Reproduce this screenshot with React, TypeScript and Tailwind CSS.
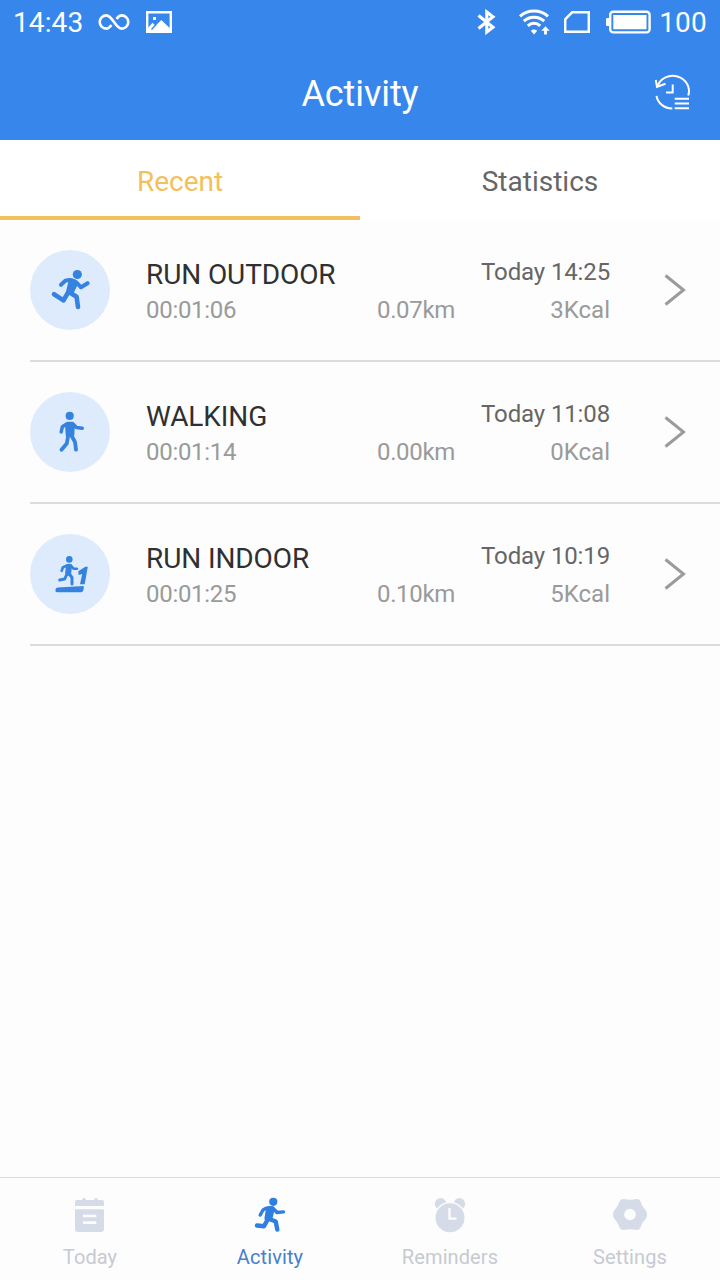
import { useState } from "react";

type ActivityKind = "outdoor" | "walking" | "indoor";

interface Activity {
  id: number;
  kind: ActivityKind;
  title: string;
  duration: string;
  distance: string;
  date: string;
  calories: string;
}

const ACTIVITIES: Activity[] = [
  {
    id: 1,
    kind: "outdoor",
    title: "RUN OUTDOOR",
    duration: "00:01:06",
    distance: "0.07km",
    date: "Today 14:25",
    calories: "3Kcal",
  },
  {
    id: 2,
    kind: "walking",
    title: "WALKING",
    duration: "00:01:14",
    distance: "0.00km",
    date: "Today 11:08",
    calories: "0Kcal",
  },
  {
    id: 3,
    kind: "indoor",
    title: "RUN INDOOR",
    duration: "00:01:25",
    distance: "0.10km",
    date: "Today 10:19",
    calories: "5Kcal",
  },
];

const NAV_ITEMS = [
  { label: "Today", Icon: CalendarIcon },
  { label: "Activity", Icon: RunnerIcon },
  { label: "Reminders", Icon: AlarmIcon },
  { label: "Settings", Icon: GearIcon },
];

export default function App() {
  const [tab, setTab] = useState("Recent");
  const [page, setPage] = useState("Activity");

  return (
    <div className="w-[720px] h-[1280px] flex flex-col bg-[#fdfdfd] font-[Roboto,sans-serif] overflow-hidden">
      <header className="h-[140px] shrink-0 bg-[#3686eb] text-white">
        <StatusBar />
        <div className="h-[94px] grid grid-cols-[1fr_auto_1fr] items-center">
          <h1 className="col-start-2 pt-[2px] text-[36px] leading-none font-normal tracking-[-0.1px]">
            Activity
          </h1>
          <button className="justify-self-end mr-7" aria-label="History">
            <HistoryIcon />
          </button>
        </div>
      </header>

      <div className="h-20 shrink-0 grid grid-cols-2 bg-white">
        {["Recent", "Statistics"].map((name) => (
          <button
            key={name}
            onClick={() => setTab(name)}
            className={`pt-2 text-[28px] leading-none border-b-4 ${
              tab === name
                ? "text-[#f3c05c] border-[#f0c15e]"
                : "text-[#666] border-transparent"
            }`}
          >
            {name}
          </button>
        ))}
      </div>

      <main className="flex-1">
        {ACTIVITIES.map((activity) => (
          <ActivityRow key={activity.id} activity={activity} />
        ))}
      </main>

      <nav className="h-[103px] shrink-0 grid grid-cols-4 border-t border-[#d9dbde]">
        {NAV_ITEMS.map(({ label, Icon }) => (
          <button
            key={label}
            onClick={() => setPage(label)}
            className={`flex flex-col items-center pt-[17px] ${
              page === label ? "text-[#2f7fe0]" : "text-[#d5dbe7]"
            }`}
          >
            <Icon />
            <span
              className={`mt-3 text-[20px] leading-5 tracking-[0.1px] ${
                page === label ? "text-[#4680cf]" : "text-[#c6cad2]"
              }`}
            >
              {label}
            </span>
          </button>
        ))}
      </nav>
    </div>
  );
}

function ActivityRow({ activity }: { activity: Activity }) {
  return (
    <div className="ml-[30px] h-[142px] flex items-center border-b-2 border-[#dcdcdc]">
      <div className="size-20 shrink-0 rounded-full bg-[#deebfc] text-[#3682df]">
        <ActivityIcon kind={activity.kind} />
      </div>
      <div className="ml-9 w-[231px] pt-[5px]">
        <p className="text-[28px] leading-9 tracking-[-0.1px] text-[#303030]">
          {activity.title}
        </p>
        <p className="text-[24px] leading-[35px] tracking-[-0.3px] text-[#9a9a9a]">
          {activity.duration}
        </p>
      </div>
      <div className="w-[233px] pt-[3px]">
        <p className="text-[24px] leading-[37px] tracking-[-0.13px] text-right text-[#666]">
          {activity.date}
        </p>
        <div className="flex justify-between text-[24px] leading-[39px] text-[#9a9a9a]">
          <span className="tracking-[-0.35px]">{activity.distance}</span>
          <span>{activity.calories}</span>
        </div>
      </div>
      <svg
        className="ml-[53px] w-6 h-9"
        viewBox="0 0 24 36"
        fill="none"
        stroke="#9b9b9b"
        strokeWidth="3"
      >
        <path d="M2.5 3.5 20.5 18 2.5 32.5" />
      </svg>
    </div>
  );
}

function ActivityIcon({ kind }: { kind: ActivityKind }) {
  if (kind === "outdoor") {
    return (
      <Figure>
        <circle cx="47.3" cy="24.5" r="4.6" fill="currentColor" stroke="none" />
        <path d="M31 34.8 35.6 30.6Q40 29 44 31L47 33 51 37.3 57.6 33.2" strokeWidth="4" />
        <path d="M40.5 32 46 33.5 41.5 42.5 38 42Z" fill="currentColor" strokeWidth="4.2" />
        <path d="M37.5 43.5 33.5 50.4 24 44.2" strokeWidth="4.6" />
        <path d="M40.5 43 46.6 46.8 48 57" strokeWidth="4.6" />
      </Figure>
    );
  }

  if (kind === "walking") {
    return (
      <Figure>
        <circle cx="39.7" cy="23.9" r="4.1" fill="currentColor" stroke="none" />
        <path d="M31.2 40 32.3 34.8 37.5 31.5H42.5L46.5 35.5 52.2 36.3" strokeWidth="3.5" />
        <path d="M37.2 33H42.8L42.2 43H37.8Z" fill="currentColor" strokeWidth="4.2" />
        <path d="M38.3 43 36.8 51.5 31.5 57.7" strokeWidth="3.8" />
        <path d="M41.2 43 45 50 46 57.7" strokeWidth="3.8" />
      </Figure>
    );
  }

  return (
    <Figure>
      <circle cx="39.3" cy="25.4" r="3.3" fill="currentColor" stroke="none" />
      <path d="M31.7 36.8 32.8 33.5 37.5 31.2H40.5L43.5 34.6 47 34.8" strokeWidth="2.6" />
      <path d="M38.9 32.8 38.2 38.8" strokeWidth="6" />
      <path d="M37.2 39.5 34.7 45 29.7 46" strokeWidth="3" />
      <path d="M39 39.5 42 43.5V50" strokeWidth="3" />
      <path
        d="M48.3 37.2 55.3 32.8H57.8L54.7 50.3H50L52.2 39.9 48.6 41ZM27.5 53.6 53.7 52V54.8Q53.2 58.2 51 58.2H27Q25.2 58.2 25.4 56 25.6 53.8 27.5 53.6Z"
        fill="currentColor"
        stroke="none"
      />
    </Figure>
  );
}

function Figure({ children }: { children: React.ReactNode }) {
  return (
    <svg
      className="size-20"
      viewBox="0 0 80 80"
      fill="none"
      stroke="currentColor"
      strokeLinecap="round"
      strokeLinejoin="round"
    >
      {children}
    </svg>
  );
}

function StatusBar() {
  return (
    <div className="h-[46px] flex items-center pl-[13px] pr-[13px] pb-[2px] text-[28px] leading-none">
      <span className="w-[85px] pt-[2px] tracking-[0.1px]">14:43</span>
      <svg className="w-8 h-[18px]" viewBox="0 0 32 18" fill="none" stroke="currentColor" strokeWidth="2.6">
        <path d="M13.5 12C11.8 14.4 10.3 15.6 8.3 15.6A6.6 6.6 0 0 1 8.3 2.4C14.5 2.4 17.5 15.6 23.7 15.6A6.6 6.6 0 0 0 23.7 2.4C21.7 2.4 20.2 3.6 18.5 6" />
      </svg>
      <svg className="ml-4 w-[26px] h-[22px]" viewBox="0 0 26 22">
        <path d="M1.2 1.2H24.8V20.8H1.2Z" fill="none" stroke="currentColor" strokeWidth="2.4" />
        <path d="M1 20V18L6.5 11.7 9.5 14.7 15.3 9 24.8 18V21H1ZM7 6h3v3H7Z" fill="currentColor" />
        <path d="M5.5 18.5 10 13.5" stroke="#3686eb" strokeWidth="1.3" />
      </svg>

      <div className="ml-auto flex items-center">
        <svg className="w-5 h-[26px]" viewBox="0 0 20 26" fill="none" stroke="currentColor" strokeWidth="3.1">
          <path d="M1.5 6.5 16 18.2 9.8 23V3L16 7.8 1.5 19.5" />
        </svg>
        <svg className="ml-[22px] w-[31px] h-[26px]" viewBox="0 0 31 26" fill="none" stroke="currentColor" strokeWidth="3">
          <path d="M1 7.3C8.5.2 21.5.2 29 7.3M4.8 12.2C10.5 6.8 19.5 6.8 25.2 12.2M8.8 16.8C12.4 13.3 17.6 13.3 21.2 16.8" />
          <path d="M15 25.4 11.8 21.8Q15 19 18.2 21.8ZM26.5 17.3 30.7 21.7H27.9V25.5H25.1V21.7H22.3Z" fill="currentColor" stroke="none" />
        </svg>
        <svg className="ml-[14px] w-[26px] h-[22px]" viewBox="0 0 26 22" fill="none" stroke="currentColor" strokeWidth="2.5">
          <path d="M8.3 1.2H24.8V20.8H1.2V8.3Z" />
        </svg>
        <svg className="ml-4 w-[45px] h-6" viewBox="0 0 45 24">
          <rect x="4.2" y="1.8" width="39.4" height="20.6" rx="3" fill="none" stroke="currentColor" strokeWidth="2.4" />
          <path d="M7.3 5H40.5V19.2H7.3ZM3 8V16H1.2Q0 16 0 14.8V9.2Q0 8 1.2 8Z" fill="currentColor" />
        </svg>
        <span className="ml-2 pt-[2px] tracking-[0.2px]">100</span>
      </div>
    </div>
  );
}

function HistoryIcon() {
  return (
    <svg className="size-10" viewBox="0 0 40 40" fill="none" stroke="currentColor" strokeWidth="2">
      <path d="M5.3 13.8A16 15.2 0 0 1 36.3 22.5M4.5 22.8A16 14.8 0 0 0 20.3 35.5" />
      <path d="M3.8 7 5 13.8 13.5 10.7M20.7 11.5V19.5H14" />
      <path d="M22.7 25.8H37M22.7 30.6H37M22.7 35.3H37" />
    </svg>
  );
}

function CalendarIcon() {
  return (
    <svg className="size-10" viewBox="0 0 40 40" fill="currentColor">
      <path d="M5 11V7Q5 5 7 5H12L13 3H15L16 5H24L25 3H27L28 5H32Q34 5 34 7V11ZM5 14.3H34V34Q34 37 31 37H8Q5 37 5 34Z" />
      <path d="M13 21H26.3M13 27.6H26.3" stroke="#fdfdfd" strokeWidth="2.6" />
    </svg>
  );
}

function RunnerIcon() {
  return (
    <svg
      className="size-10"
      viewBox="0 0 40 40"
      fill="none"
      stroke="currentColor"
      strokeLinecap="round"
      strokeLinejoin="round"
    >
      <circle cx="23.3" cy="6.8" r="4.1" fill="currentColor" stroke="none" />
      <path d="M10.2 20 13 15Q15.5 12.8 19 12.8H22.5L27 17.5 33.5 16.9" strokeWidth="3.4" />
      <path d="M17.8 14H22.8L20.3 24.5 16.3 23.5Z" fill="currentColor" strokeWidth="3.8" />
      <path d="M17.7 24.5 14 31.3 7 30.5" strokeWidth="4.4" />
      <path d="M20 24.3 25.7 26.5 27.3 34.6" strokeWidth="4.4" />
    </svg>
  );
}

function AlarmIcon() {
  return (
    <svg className="size-10" viewBox="0 0 40 40" fill="currentColor">
      <circle cx="10.6" cy="8.8" r="5.8" />
      <circle cx="29.4" cy="8.8" r="5.8" />
      <circle cx="20" cy="22.7" r="16" fill="#fdfdfd" />
      <circle cx="20" cy="22.7" r="14.5" />
      <path d="M19.5 13V23.7H26.5" fill="none" stroke="#fdfdfd" strokeWidth="2.2" />
    </svg>
  );
}

function GearIcon() {
  return (
    <svg className="size-10" viewBox="0 0 40 40" fill="currentColor">
      <path
        fillRule="evenodd"
        d="M13.5 4Q20 5.6 26.5 4 29 3.8 30.3 6 31.8 11.5 36 15.7 38 19.5 36 23.3 31.8 27.5 30.3 33 29 35.2 26.5 35 20 33.4 13.5 35 11 35.2 9.7 33 8.2 27.5 4 23.3 2 19.5 4 15.7 8.2 11.5 9.7 6 11 3.8 13.5 4ZM20 13.7A5.8 5.8 0 1 0 20 25.3 5.8 5.8 0 1 0 20 13.7Z"
      />
    </svg>
  );
}
